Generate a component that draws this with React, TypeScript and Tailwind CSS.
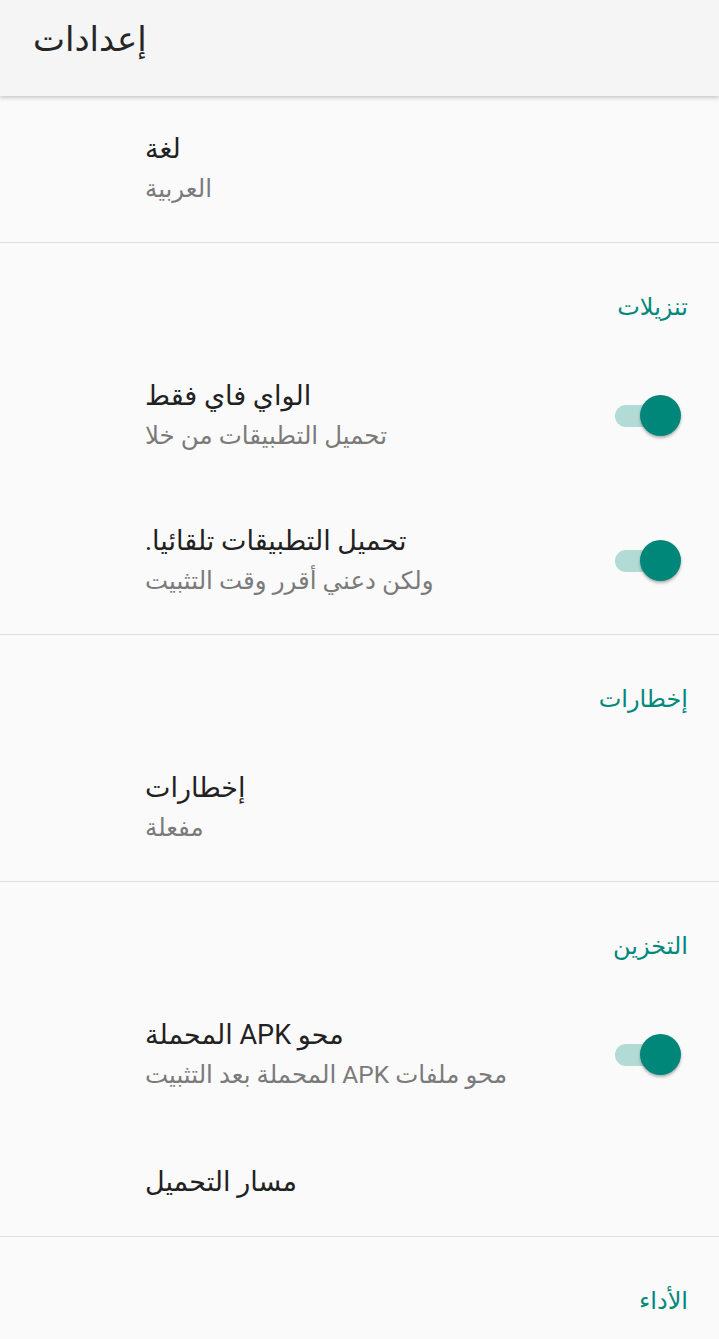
const font = { fontFamily: '"Roboto", "DejaVu Sans", sans-serif' };

function Toggle() {
  return (
    <div className="relative h-[42px] w-[66px] shrink-0">
      <div className="absolute left-0 top-[10px] h-[22px] w-[58px] rounded-full bg-[#b2dbd6]" />
      <div className="absolute right-0 top-0 h-[41px] w-[41px] rounded-full bg-[#00877a] shadow-[0_2px_3px_rgba(0,0,0,0.3)]" />
    </div>
  );
}

function Category({ title }: { title: string }) {
  return (
    <div className="pt-[44px] pb-[17px] pr-[31px] flex justify-end">
      <div dir="rtl" className="text-[24px] leading-[40px] text-[#00897b]">
        {title}
      </div>
    </div>
  );
}

function Item({
  title,
  summary,
  toggle,
}: {
  title: string;
  summary?: string;
  toggle?: boolean;
}) {
  return (
    <div
      className={
        "flex items-center pl-[145px] pr-[38px] " +
        (summary ? "pt-[32px] pb-[33px]" : "py-[34px]")
      }
    >
      <div className="flex-1 min-w-0 flex flex-col items-start">
        <div dir="rtl" className="text-[27px] leading-[40px] text-[#212121]">
          {title}
        </div>
        {summary && (
          <div dir="rtl" className="text-[24.5px] leading-[40px] text-[#7a7a7a]">
            {summary}
          </div>
        )}
      </div>
      {toggle && <Toggle />}
    </div>
  );
}

function Divider() {
  return <div className="h-px bg-[#dedede]" />;
}

export default function App() {
  return (
    <div className="min-h-screen bg-[#fafafa] overflow-hidden" style={font}>
      {/* toolbar */}
      <div className="relative z-10 h-[96px] bg-[#f5f5f5] shadow-[0_2px_4px_rgba(0,0,0,0.2)] flex items-center pl-[33px] pb-[18px]">
        <div dir="rtl" className="text-[34px] leading-[48px] text-[#262626]">
          إعدادات
        </div>
      </div>

      <div className="pt-[1px]">
        <Item title="لغة" summary="العربية" />
        <Divider />

        <Category title="تنزيلات" />
        <Item title="الواي فاي فقط" summary="تحميل التطبيقات من خلا" toggle />
        <Item
          title="تحميل التطبيقات تلقائيا."
          summary="ولكن دعني أقرر وقت التثبيت"
          toggle
        />
        <Divider />

        <Category title="إخطارات" />
        <Item title="إخطارات" summary="مفعلة" />
        <Divider />

        <Category title="التخزين" />
        <Item
          title="محو APK المحملة"
          summary="محو ملفات APK المحملة بعد التثبيت"
          toggle
        />
        <Item title="مسار التحميل" />
        <Divider />

        <Category title="الأداء" />
      </div>
    </div>
  );
}
